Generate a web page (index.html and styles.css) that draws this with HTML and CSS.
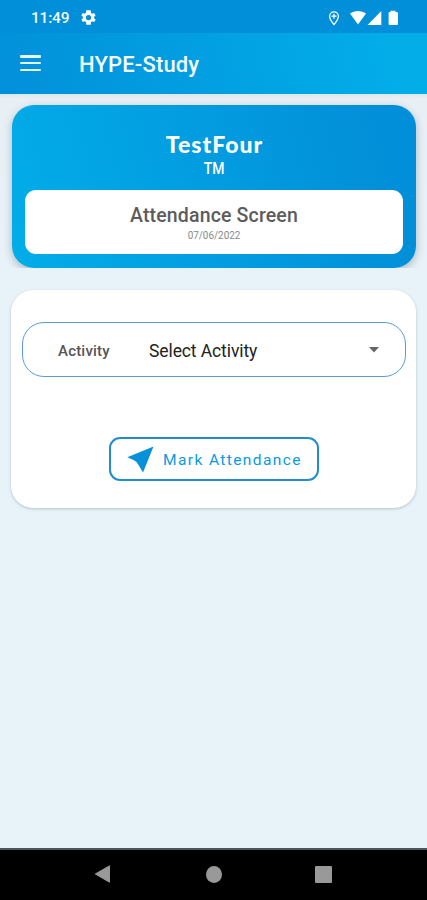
FILE: index.html
```html
<!DOCTYPE html>
<html lang="en">
<head>
<meta charset="utf-8">
<title>HYPE-Study</title>
<link rel="stylesheet" href="styles.css">
</head>
<body>
<div class="status">
  <span class="clock">11:49</span>
  <svg class="gear" viewBox="2 2 20 20"><path fill="#fff" fill-rule="evenodd" d="M19.4 13a7.500 7.500 0 0 0 0-2l2.100-1.600-2-3.500-2.500 1a7.500 7.500 0 0 0-1.700-1L15 2.200H9l-.4 3.700a7.500 7.500 0 0 0-1.700 1l-2.500-1-2 3.500L4.600 11a7.500 7.500 0 0 0 0 2l-2.100 1.600 2 3.500 2.500-1c.5.400 1.100.8 1.700 1l.4 3.700h6l.3-3.700c.6-.2 1.200-.6 1.700-1l2.500 1 2-3.500zM12 15.500a3.500 3.500 0 1 1 0-7 3.500 3.500 0 0 1 0 7z"/></svg>
  <svg class="signals" viewBox="0 0 72 18">
    <path d="M8 15.500C5 12 3.600 9.700 3.600 7.200a4.400 4.400 0 0 1 8.800 0C12.400 9.700 11 12 8 15.500z" fill="none" stroke="#fff" stroke-width="1.300"/>
    <path d="M8 4.700v5M5.500 7.200h5" stroke="#fff" stroke-width="1.200"/>
    <path d="M24 4.500c4.600-3.500 11.400-3.500 16 0L32 15.500z" fill="#fff"/>
    <path d="M55.300 2v14H41.500z" fill="#fff"/>
    <path d="M64.500 1.700h5v1.400h1.300q1.200 0 1.200 1.200v10.500q0 1.200-1.200 1.200h-7q-1.200 0-1.200-1.200V4.300q0-1.200 1.200-1.200h.7z" fill="#fff"/>
  </svg>
</div>
<header class="appbar">
  <div class="menu"><i></i><i></i><i></i></div>
  <h1>HYPE-Study</h1>
</header>
<section class="hero">
  <div class="banner">
    <div class="brand">TestFour</div>
    <div class="tm">TM</div>
    <div class="title-box">
      <h2>Attendance Screen</h2>
      <div class="date">07/06/2022</div>
    </div>
  </div>
</section>
<main>
  <div class="card">
    <div class="select">
      <span class="label">Activity</span>
      <span class="value">Select Activity</span>
      <svg class="caret" viewBox="0 0 10 6"><path d="M0 0h10L5 5.500z" fill="#666"/></svg>
    </div>
    <button class="mark">
      <svg class="arrow" viewBox="0 0 27 27"><path d="M26.500.5L.3 11.300L6.500 14Q10 15.500 11.500 19L16 26.500z" fill="#0890d8"/></svg>
      <span>Mark Attendance</span>
    </button>
  </div>
</main>
<nav>
  <svg viewBox="0 0 16 18"><path d="M15 .8v16.400L.8 9z" fill="#999" stroke="#999" stroke-linejoin="round"/></svg>
  <i class="home"></i>
  <i class="recent"></i>
</nav>
</body>
</html>
```
FILE: styles.css
```css
* { box-sizing: border-box; }
body {
  margin: 0;
  width: 427px;
  height: 900px;
  overflow: hidden;
  display: flex;
  flex-direction: column;
  background: #e8f3f9;
  font-family: Roboto, sans-serif;
}
h1, h2 { margin: 0; font-weight: 500; }
svg { display: block; flex: none; }
.status {
  height: 33px;
  flex: none;
  display: flex;
  align-items: center;
  padding: 2px 29px 0 31px;
  background: #028fd9;
  color: #f0faff;
}
.clock { width: 50px; font-size: 15.5px; font-weight: 500; letter-spacing: -.2px; }
.gear { width: 15px; height: 15px; }
.signals { width: 72px; height: 18px; margin-left: auto; }
.appbar {
  height: 61px;
  flex: none;
  display: flex;
  align-items: center;
  padding-left: 20px;
  background: linear-gradient(75deg, #0290da, #02ade8 90%);
  color: #f4fbff;
}
.menu { width: 21px; height: 16px; margin-top: -1px; display: flex; flex-direction: column; justify-content: space-between; }
.menu i { height: 2.5px; background: #e6f6fd; border-radius: 1px; }
.appbar h1 { margin-left: 38px; font-size: 22px; line-height: 28px; padding-top: 3px; letter-spacing: .15px; }
.hero {
  height: 174px;
  flex: none;
  overflow: hidden;
  padding: 11px 11px 0 12px;
  background: linear-gradient(#dde5ee, #e8f0f6 5px, #e8f2f8);
}
.banner {
  height: 162.5px;
  padding: 26px 13px 0;
  border-radius: 22px;
  text-align: center;
  color: #fff;
  background: linear-gradient(75deg, #02ade8, #028fd9 90%);
  box-shadow: 0 3px 9px rgba(70, 90, 110, .38);
}
.brand { height: 28px; font: 900 23px/27px Lato, sans-serif; letter-spacing: 1px; text-indent: 1px; }
.tm { height: 19px; margin-bottom: 12px; font-size: 16px; line-height: 19px; font-weight: 500; transform: scaleX(.87); }
.title-box { height: 63.5px; padding-top: 14px; border-radius: 11px; background: #fff; color: #5c5c5c; }
.title-box h2 { font-size: 19.5px; line-height: 23px; letter-spacing: .15px; }
.date { font-size: 11.5px; line-height: 17px; color: #888; transform: scaleX(.86); }
main { flex: 1; padding: 22px 11px 0; }
.card {
  height: 218px;
  padding: 32px 10px 0 11px;
  border-radius: 22px;
  background: #fff;
  box-shadow: 0 1px 3px rgba(40, 65, 80, .28);
}
.select {
  height: 55px;
  display: flex;
  align-items: center;
  padding: 2px 26px 0 35px;
  border: 1px solid #5b9dd3;
  border-radius: 22px;
}
.label { width: 91px; font-size: 15px; font-weight: 500; color: #555; letter-spacing: .2px; }
.value { font-size: 17.5px; color: #222; letter-spacing: -.1px; }
.caret { width: 10px; height: 6px; margin-left: auto; margin-top: -2px; }
.mark {
  width: 210px;
  height: 44px;
  margin: 60px 0 0 87px;
  padding: 0 0 0 16px;
  display: flex;
  align-items: center;
  border: 2px solid #238ccf;
  border-radius: 11px;
  background: #fff;
  color: #0b9add;
  font: 400 15.5px Roboto, sans-serif;
  letter-spacing: 1.4px;
  white-space: nowrap;
}
.mark span { padding-top: 1px; }
.arrow { width: 27px; height: 27px; margin-right: 9px; }
nav {
  height: 52px;
  flex: none;
  display: flex;
  align-items: center;
  padding: 0 94px;
  background: #000;
  border-top: 2px solid #51585b;
}
nav svg { width: 17px; height: 18px; margin-top: -2px; }
.home { width: 16px; height: 17px; margin: -2px 0 0 95px; border-radius: 50%; background: #999; }
.recent { width: 17px; height: 17px; margin: -2px 0 0 93px; border-radius: 1px; background: #999; }
```
